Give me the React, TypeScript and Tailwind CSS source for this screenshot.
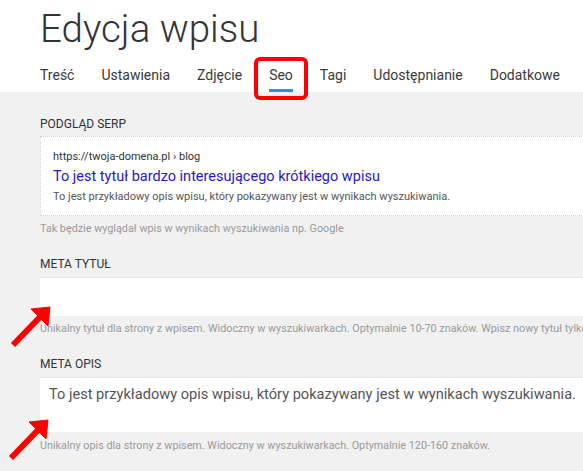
import React from "react";

const tabs = ["Treść", "Ustawienia", "Zdjęcie", "Seo", "Tagi", "Udostępnianie", "Dodatkowe"];

export default function App() {
  return (
    <div className="relative w-[583px] h-[471px] overflow-hidden bg-[#f1f1f1] font-['Roboto',sans-serif]">
      <div className="bg-white pl-10 pt-[10px]">
        <h1 className="text-[38.5px] leading-none font-light text-[#333]">Edycja wpisu</h1>
        <div className="flex gap-[27px] mt-[19px] whitespace-nowrap">
          {tabs.map((t) => (
            <div
              key={t}
              className={
                t === "Seo"
                  ? "relative text-[14px] leading-none text-[#3a3a3a] pb-[7px] border-b-[3px] border-[#2d8cf0]"
                  : "relative text-[14px] leading-none text-[#3a3a3a] pb-[7px] border-b-[3px] border-transparent"
              }
            >
              {t}
              {t === "Seo" && (
                <div className="absolute left-[-15px] right-[-15px] top-[-11px] bottom-[-11px] border-4 border-[#ff0000] rounded-md" />
              )}
            </div>
          ))}
        </div>
      </div>

      <div className="pl-10 pt-[25px] w-[660px]">
        <div className="text-[12px] leading-[14px] text-[#333] uppercase">Podgląd SERP</div>
        <div className="mt-[5px] bg-white border border-dotted border-[#d4d4d4] pl-[12px] pt-[12px] pb-[11px]">
          <div className="text-[11px] leading-[16px] text-[#333]">https://twoja-domena.pl › blog</div>
          <div className="mt-[2px] text-[14.5px] leading-[20px] text-[#2619bd]">
            To jest tytuł bardzo interesującego krótkiego wpisu
          </div>
          <div className="mt-[3px] text-[11px] leading-[14px] text-[#555]">
            To jest przykładowy opis wpisu, który pokazywany jest w wynikach wyszukiwania.
          </div>
        </div>
        <div className="mt-[6px] text-[10.8px] leading-[13px] text-[#9a9a9a]">
          Tak będzie wyglądał wpis w wynikach wyszukiwania np. Google
        </div>

        <div className="mt-[22px] text-[12px] leading-[14px] text-[#333] uppercase">Meta tytuł</div>
        <div className="mt-[6px] h-[39px] bg-white border-t border-[#e6e6e6]" />
        <div className="mt-[6px] text-[10.8px] leading-[13px] text-[#9a9a9a] whitespace-nowrap">
          Unikalny tytuł dla strony z wpisem. Widoczny w wyszukiwarkach. Optymalnie 10-70 znaków. Wpisz nowy tytuł tylko jeśli chcesz go zmienić.
        </div>

        <div className="mt-[22px] text-[12px] leading-[14px] text-[#333] uppercase">Meta opis</div>
        <div className="mt-[6px] h-[55px] bg-white border-t border-[#e6e6e6] pl-[9px] pt-[6px]">
          <div className="text-[14.6px] leading-[20px] text-[#555] whitespace-nowrap">
            To jest przykładowy opis wpisu, który pokazywany jest w wynikach wyszukiwania.
          </div>
        </div>
        <div className="mt-[7px] text-[10.8px] leading-[13px] text-[#9a9a9a] whitespace-nowrap">
          Unikalny opis dla strony z wpisem. Widoczny w wyszukiwarkach. Optymalnie 120-160 znaków.
        </div>
      </div>

      <svg className="absolute left-0 top-0 pointer-events-none" width="583" height="471" viewBox="0 0 583 471">
        <g fill="#ff0000" stroke="#ff0000">
          <line x1="13" y1="345" x2="40" y2="317" strokeWidth="6" />
          <polygon points="50,307 31,309 48,326" strokeWidth="1" />
          <line x1="11" y1="458" x2="38" y2="430" strokeWidth="6" />
          <polygon points="48,420 29,422 46,439" strokeWidth="1" />
        </g>
      </svg>
    </div>
  );
}
